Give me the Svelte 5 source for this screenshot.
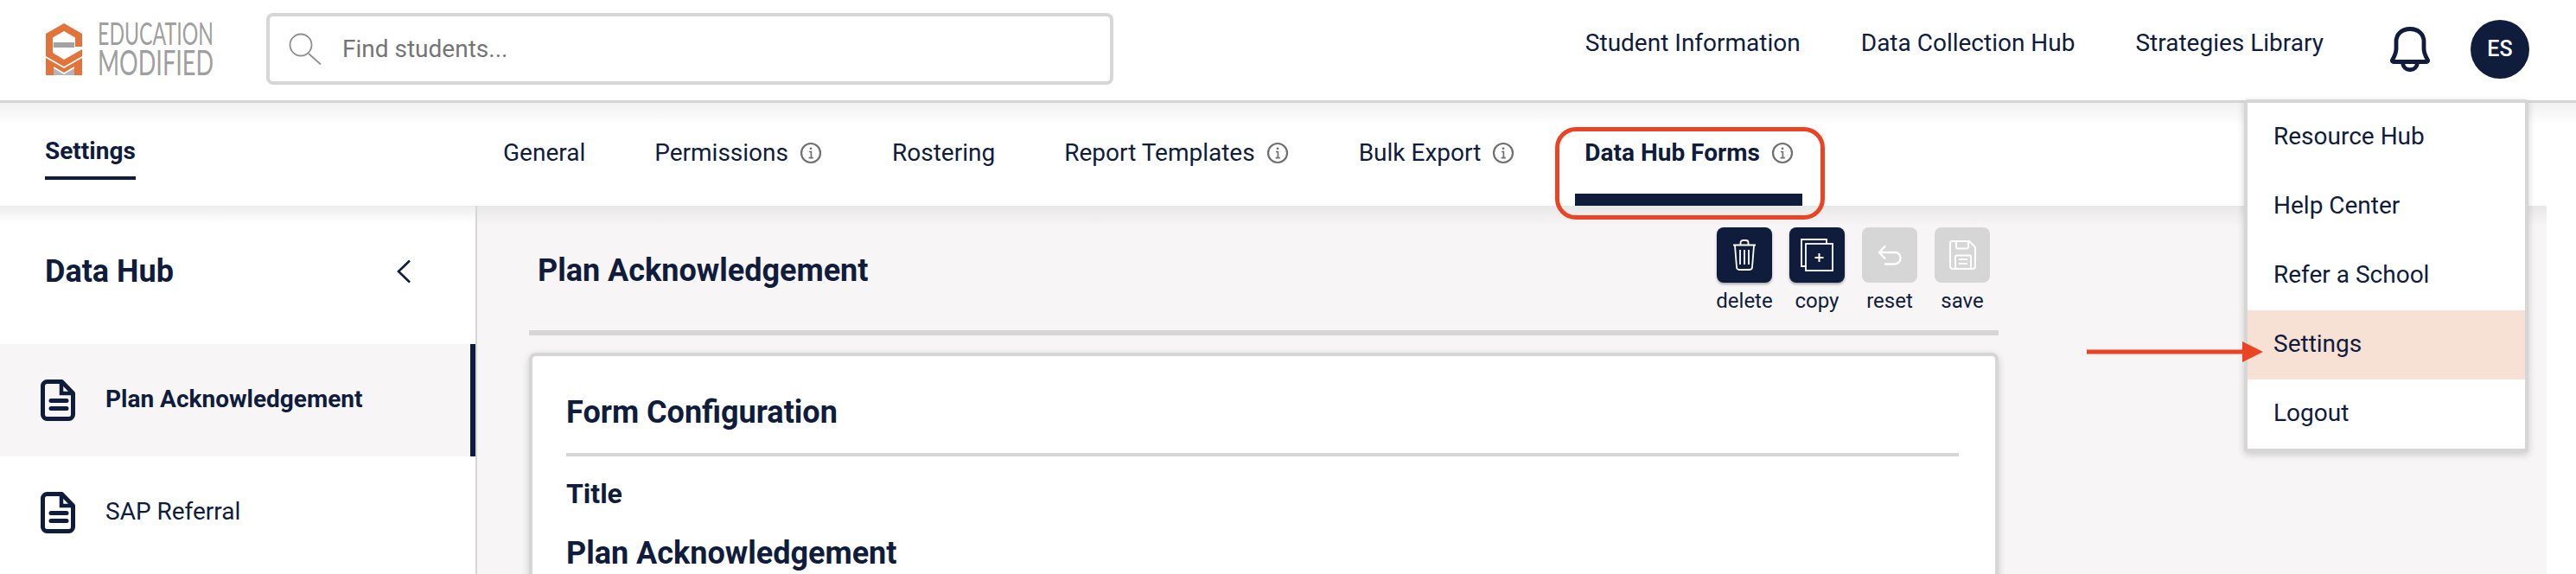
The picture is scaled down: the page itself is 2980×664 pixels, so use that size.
<script>
  const topLinks = ['Student Information', 'Data Collection Hub', 'Strategies Library'];
  const tabs = [
    { label: 'General', info: false },
    { label: 'Permissions', info: true },
    { label: 'Rostering', info: false },
    { label: 'Report Templates', info: true },
    { label: 'Bulk Export', info: true },
    { label: 'Data Hub Forms', info: true, active: true }
  ];
  const menu = ['Resource Hub', 'Help Center', 'Refer a School', 'Settings', 'Logout'];
  const forms = [
    { label: 'Plan Acknowledgement', active: true },
    { label: 'SAP Referral', active: false }
  ];
</script>

{#snippet info()}
  <svg class="info" viewBox="0 0 26 26" width="26" height="26" aria-hidden="true">
    <circle cx="13" cy="13" r="11" fill="none" stroke="#6f6f6f" stroke-width="2.2" />
    <path d="M11 11.5h2.4v7M10.6 18.6h5.2" fill="none" stroke="#6f6f6f" stroke-width="1.7" />
    <circle cx="13" cy="7.8" r="1.4" fill="#6f6f6f" />
  </svg>
{/snippet}

{#snippet doc()}
  <svg viewBox="0 0 40 48" width="40" height="48" aria-hidden="true">
    <path d="M7.5 2.5H24.5L37.5 16V40.5a5 5 0 0 1-5 5H7.5a5 5 0 0 1-5-5V7.5a5 5 0 0 1 5-5Z" fill="none" stroke="#0f1c3c" stroke-width="5" stroke-linejoin="round" />
    <path d="M24 3V16H37" fill="none" stroke="#0f1c3c" stroke-width="4.500" />
    <path d="M12 24.500h18M12 33.500h18" stroke="#0f1c3c" stroke-width="5" stroke-linecap="round" />
  </svg>
{/snippet}

<div class="page">
  <header class="top">
    <div class="logo">
      <svg viewBox="0 0 196 64" width="196" height="64" aria-label="Education Modified">
        <path d="M22 2 43 14V29H35V18.5L22 11 9 18.5V36L22 44 43 32V40L22 52 1 40V14Z" fill="#e2733a" />
        <rect x="10" y="24" width="24" height="6" fill="#a3a3a3" />
        <path d="M1 42 22 54 43 42V62H34V52L22 59 10 52V62H1Z" fill="#e2733a" />
        <path d="M10 54 22 61 34 54V62H10Z" fill="#b5b5b5" />
        <text x="61" y="27" font-size="36" textLength="134" lengthAdjust="spacingAndGlyphs" class="lt">EDUCATION</text>
        <text x="61" y="62" font-size="40" textLength="134" lengthAdjust="spacingAndGlyphs" class="lt">MODIFIED</text>
      </svg>
    </div>
    <div class="search">
      <svg viewBox="0 0 38 37" width="38" height="37" aria-hidden="true">
        <circle cx="14" cy="14" r="12.5" fill="none" stroke="#8f8f8f" stroke-width="1.8" />
        <path d="M23 24 37 36.5" stroke="#8f8f8f" stroke-width="1.8" />
      </svg>
      <span>Find students...</span>
    </div>
    <nav class="links">
      {#each topLinks as l}<span>{l}</span>{/each}
    </nav>
    <svg class="bell" viewBox="0 0 46 52" width="46" height="52" aria-hidden="true">
      <path d="M23 2.500C13 2.500 7 9 7 17V25C7 31 5 34 2.500 38.500C2 39.500 3 40.500 4 40.500H42C43 40.500 44 39.500 43.500 38.500C41 34 39 31 39 25V17C39 9 33 2.500 23 2.500Z" fill="none" stroke="#0f1c3c" stroke-width="4.800" stroke-linejoin="round" />
      <path d="M14.500 41C15 52.500 31 52.500 31.500 41" fill="none" stroke="#0f1c3c" stroke-width="4.800" />
    </svg>
    <div class="avatar">ES</div>
  </header>

  <div class="subnav">
    <div class="subtitle"><span>Settings</span></div>
    <div class="tabs">
      {#each tabs as t}
        <div class="tab" class:active={t.active}>
          <span>{t.label}</span>
          {#if t.info}{@render info()}{/if}
          {#if t.active}<i class="bar"></i><i class="ring"></i>{/if}
        </div>
      {/each}
    </div>
  </div>

  <div class="content">
    <aside class="side">
      <div class="side-head">
        <h2>Data Hub</h2>
        <svg viewBox="0 0 18 28" width="18" height="28" aria-hidden="true">
          <path d="M16 1.5 3 14l13 12.5" fill="none" stroke="#0f1c3c" stroke-width="2.6" />
        </svg>
      </div>
      {#each forms as f}
        <div class="form-row" class:on={f.active}>
          {@render doc()}
          <span>{f.label}</span>
        </div>
      {/each}
    </aside>

    <main class="main">
      <div class="main-head">
        <h1>Plan Acknowledgement</h1>
        <div class="actions">
          <div class="act">
            <div class="btn dark">
              <svg viewBox="0 0 28 36" width="28" height="36" aria-hidden="true" fill="none" stroke="#fff" stroke-width="1.8">
                <path d="M1 6.5h26M9.5 6V3.5C9.5 2 11 1 12.5 1h3c1.500 0 3 1 3 2.500V6M3 7l2 25c.1 1.500 1 3 3 3h12c2 0 2.900-1.500 3-3l2-25M9 12v17M14 12v17M19 12v17" />
              </svg>
            </div>
            <span>delete</span>
          </div>
          <div class="act">
            <div class="btn dark">
              <svg viewBox="0 0 38 38" width="38" height="38" aria-hidden="true" fill="none" stroke="#fff" stroke-width="1.800">
                <path d="M6 32H1V1h29v5" />
                <rect x="6" y="6" width="31" height="31" />
                <path d="M16.500 22h10M21.500 17v10" stroke-width="2" />
              </svg>
            </div>
            <span>copy</span>
          </div>
          <div class="act">
            <div class="btn grey">
              <svg viewBox="0 0 28 24" width="28" height="24" aria-hidden="true" fill="none" stroke="#fff" stroke-width="2.400">
                <path d="M9 1.500 2 9l7 7.500M2 9h18c4 0 6.500 3 6.500 6.500S24 22.500 20 22.500H8" />
              </svg>
            </div>
            <span>reset</span>
          </div>
          <div class="act">
            <div class="btn grey">
              <svg viewBox="0 0 31 34" width="31" height="34" aria-hidden="true" fill="none" stroke="#fff" stroke-width="1.900">
                <path d="M3 1h20l7 7v22c0 2-1 3-3 3H4c-2 0-3-1-3-3V3c0-1 1-2 2-2Z" />
                <path d="M8 1v7c0 1 .5 1.500 1.500 1.500h11c1 0 1.500-.5 1.500-1.500V1M7 33V19c0-1 .5-1.500 1.500-1.500h15c1 0 1.500.5 1.500 1.500v14M11 22h10M11 27h10" />
              </svg>
            </div>
            <span>save</span>
          </div>
        </div>
      </div>
      <section class="card">
        <h3>Form Configuration</h3>
        <h4>Title</h4>
        <p>Plan Acknowledgement</p>
      </section>
    </main>
  </div>

  <div class="menu">
    {#each menu as m}
      <div class="item" class:sel={m === 'Settings'}><span>{m}</span></div>
    {/each}
  </div>
  <svg class="arrow" viewBox="0 0 204 24" width="204" height="24" aria-hidden="true">
    <path d="M0 9.500H180V0L204 12 180 24V14.500H0Z" fill="#ea4425" />
  </svg>
</div>

<style>
  :global(body) { margin: 0; background: #fff; }
  .page {
    position: relative;
    width: 2980px;
    height: 664px;
    overflow: hidden;
    display: flex;
    flex-direction: column;
    font-family: Roboto, "Liberation Sans", sans-serif;
    color: #0f1c3c;
    background: #fff;
  }
  .top {
    box-sizing: border-box;
    height: 119px;
    flex: none;
    display: flex;
    align-items: center;
    border-bottom: 3px solid #d6d6d6;
    padding: 0 54px 3px 52px;
  }
  .logo { width: 256px; height: 64px; flex: none; }
  .logo svg { display: block; overflow: visible; }
  .lt { font-family: Lato, "Liberation Sans", sans-serif; font-weight: 400; fill: #9f9f9f; }
  .search {
    box-sizing: border-box;
    width: 980px;
    height: 83px;
    border: 4px solid #d6d6d6;
    border-radius: 8px;
    display: flex;
    align-items: center;
    gap: 24px;
    padding-left: 22px;
    font-size: 28px;
    color: #757575;
    flex: none;
  }
  .links {
    display: flex;
    gap: 70px;
    margin-left: auto;
    font-size: 28px;
    margin-right: 77px;
    padding-bottom: 14px;
  }
  .bell { flex: none; margin-right: 47px; }
  .avatar {
    width: 68px;
    height: 68px;
    flex: none;
    border-radius: 50%;
    background: #0f1c3c;
    color: #fff;
    font-size: 25px;
    font-weight: 500;
    display: flex;
    align-items: center;
    justify-content: center;
  }
  .subnav {
    height: 119px;
    flex: none;
    box-sizing: border-box;
    display: flex;
    align-items: flex-start;
    background: linear-gradient(#f1f1f1, #fff 26px);
    position: relative;
    z-index: 1;
  }
  .subtitle {
    width: 582px;
    flex: none;
    box-sizing: border-box;
    padding: 38px 0 0 52px;
  }
  .subtitle span {
    display: inline-block;
    font-size: 28px;
    font-weight: 700;
    line-height: 36px;
    padding-bottom: 11px;
    border-bottom: 4px solid #0f1c3c;
  }
  .tabs {
    display: flex;
    gap: 80px;
    padding-top: 40px;
    font-size: 28px;
    line-height: 36px;
  }
  .tab { display: flex; align-items: center; gap: 13px; position: relative; }
  .tab.active { font-weight: 700; }
  .info { flex: none; margin-right: 1px; }
  .bar {
    position: absolute;
    left: -11px;
    width: 263px;
    top: 65px;
    height: 14px;
    background: #0f1c3c;
  }
  .ring {
    position: absolute;
    left: -34px;
    top: -12px;
    width: 312px;
    height: 107px;
    box-sizing: border-box;
    border: 5px solid #ea4425;
    border-radius: 24px;
  }
  .content { flex: 1; display: flex; min-height: 0; }
  .side {
    width: 552px;
    flex: none;
    box-sizing: border-box;
    border-right: 2px solid #d6d6d6;
    background: linear-gradient(#ececec, #fff 20px);
  }
  .side-head {
    height: 160px;
    box-sizing: border-box;
    display: flex;
    align-items: center;
    justify-content: space-between;
    padding: 0 74px 8px 52px;
  }
  .side-head h2 { margin: 0; font-size: 36px; font-weight: 700; }
  .form-row {
    height: 130px;
    box-sizing: border-box;
    display: flex;
    align-items: center;
    gap: 35px;
    padding-left: 47px;
    font-size: 28px;
  }
  .form-row span { padding-bottom: 4px; }
  .form-row svg { flex: none; }
  .form-row.on {
    background: #f7f5f6;
    font-weight: 700;
    border-right: 6px solid #0f1c3c;
  }
  .main {
    width: 2394px;
    flex: none;
    box-sizing: border-box;
    background: linear-gradient(#e9e8e8, #f7f5f6 24px);
    padding: 0 0 0 60px;
  }
  .main-head {
    width: 1700px;
    height: 150px;
    box-sizing: border-box;
    border-bottom: 6px solid #d6d6d6;
    display: flex;
    justify-content: space-between;
    padding: 25px 10px 0 10px;
  }
  h1 { margin: 24px 0 0; font-size: 36px; font-weight: 700; line-height: 52px; }
  .actions { display: flex; gap: 20px; }
  .act {
    width: 64px;
    display: flex;
    flex-direction: column;
    align-items: center;
    font-size: 24px;
    line-height: 30px;
    gap: 6px;
    white-space: nowrap;
  }
  .btn {
    width: 64px;
    height: 64px;
    border-radius: 8px;
    display: flex;
    align-items: center;
    justify-content: center;
  }
  .dark { background: #0f1c3c; box-shadow: 0 2px 3px rgba(0,0,0,.3); }
  .grey { background: #d6d6d6; }
  .card {
    box-sizing: border-box;
    width: 1700px;
    margin-top: 20px;
    height: 400px;
    background: #fff;
    border: 4px solid #d6d6d6;
    border-radius: 8px;
    box-shadow: 0 3px 10px rgba(0,0,0,.18);
    padding: 0 42px 0 39px;
  }
  h3 {
    margin: 0;
    height: 116px;
    box-sizing: border-box;
    padding-top: 44px;
    font-size: 36px;
    line-height: 42px;
    font-weight: 700;
    border-bottom: 4px solid #d6d6d6;
  }
  h4 { margin: 22px 0 0; font-size: 32px; line-height: 42px; font-weight: 700; }
  .card p { margin: 26px 0 0; font-size: 36px; line-height: 44px; font-weight: 700; }
  .menu {
    position: absolute;
    z-index: 3;
    left: 2596px;
    top: 115px;
    width: 329px;
    box-sizing: border-box;
    background: #fff;
    border: 4px solid #d6d6d6;
    border-radius: 4px;
    box-shadow: 0 3px 8px rgba(0,0,0,.18);
  }
  .item {
    height: 80px;
    box-sizing: border-box;
    line-height: 78px;
    padding-left: 30px;
    font-size: 28px;
  }
  .item.sel { background: #f7e1d5; }
  .arrow { position: absolute; z-index: 4; left: 2414px; top: 395px; }
</style>
